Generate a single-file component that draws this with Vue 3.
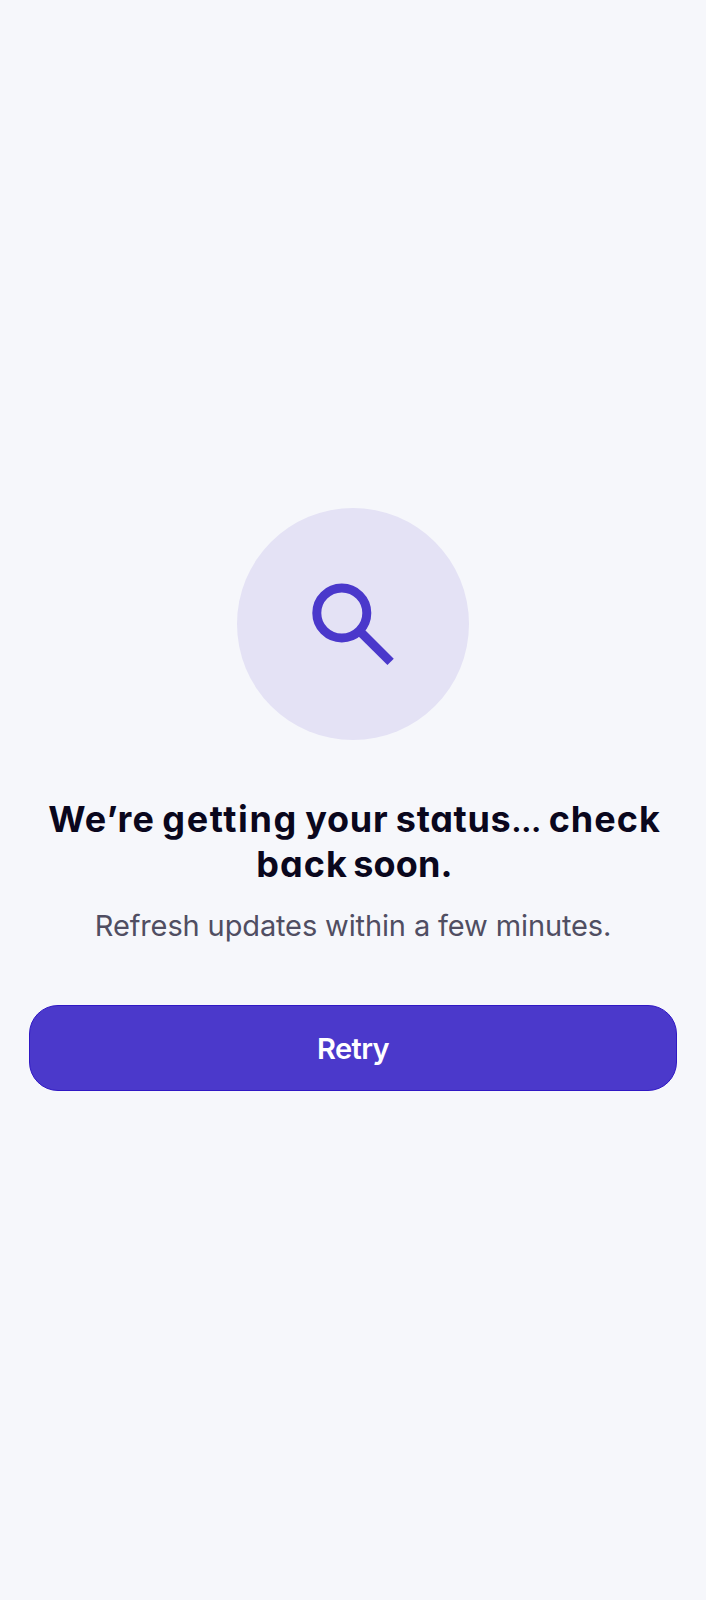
<script setup>
const titleLines = [
  [
    { text: 'We’re', kind: 'wide' },
    { text: 'getting', kind: 'widest' },
    { text: 'your', kind: 'medium' },
    { text: 'status', tail: '…', kind: 'medium' },
    { text: 'check', kind: 'wide' },
  ],
  [
    { text: 'back', kind: 'wide' },
    { text: 'soon.', kind: 'snug' },
  ],
]
</script>

<template>
  <main class="screen">
    <div class="badge">
      <svg class="icon" viewBox="0 0 106 106" fill="none" aria-hidden="true">
        <circle cx="41.8" cy="42" r="25" />
        <path d="M58.8 59.2 90.6 90.9" />
      </svg>
    </div>
    <h1 class="title">
      <span v-for="(line, i) in titleLines" :key="i" class="line">
        <template v-for="word in line" :key="word.text"><span :class="word.kind">{{ word.text }}<span v-if="word.tail" class="tail">{{ word.tail }}</span></span>{{ ' ' }}</template>
      </span>
    </h1>
    <p class="subtitle">Refresh updates within a few minutes.</p>
    <button class="retry" type="button">Retry</button>
  </main>
</template>

<style>
body {
  background: #f6f7fb;
}
</style>

<style scoped>
.screen {
  box-sizing: border-box;
  width: 100%;
  min-height: 1600px;
  padding: 508px 29px 0;
  display: flex;
  flex-direction: column;
  align-items: center;
  background: #f6f7fb;
  font-family: Inter, "Liberation Sans", sans-serif;
}
.badge {
  width: 232px;
  height: 232px;
  border-radius: 50%;
  background: #e4e2f5;
  display: flex;
  align-items: center;
  justify-content: center;
}
.icon {
  width: 106px;
  height: 106px;
  stroke: #4a38cb;
  stroke-width: 9;
}
.title {
  margin: 57px 0 0;
  padding-left: 3px;
  font-size: 36px;
  line-height: 45px;
  font-weight: 650;
  font-feature-settings: "cv11" 1;
  color: #0a071d;
  text-align: center;
  word-spacing: -1px;
}
.line {
  display: block;
  white-space: nowrap;
}
.line + .line {
  word-spacing: -3px;
}
.wide {
  letter-spacing: 1px;
}
.widest {
  letter-spacing: 1.6px;
}
.medium {
  letter-spacing: 0.7px;
}
.snug {
  letter-spacing: 0.1px;
}
.tail {
  font-size: 28px;
  line-height: 1;
  font-weight: 800;
  letter-spacing: 0;
}
.subtitle {
  margin: 19px 0 0;
  font-size: 29px;
  line-height: 40px;
  letter-spacing: -0.13px;
  color: #504e62;
  white-space: nowrap;
}
.retry {
  box-sizing: border-box;
  width: 100%;
  height: 86px;
  margin: 59px 0 0;
  padding: 1px 0 0;
  border: 1px solid #3018c4;
  border-radius: 29px;
  background: #4b39cb;
  color: #fff;
  font: 600 29px/40px Inter, "Liberation Sans", sans-serif;
  letter-spacing: -0.6px;
}
</style>
